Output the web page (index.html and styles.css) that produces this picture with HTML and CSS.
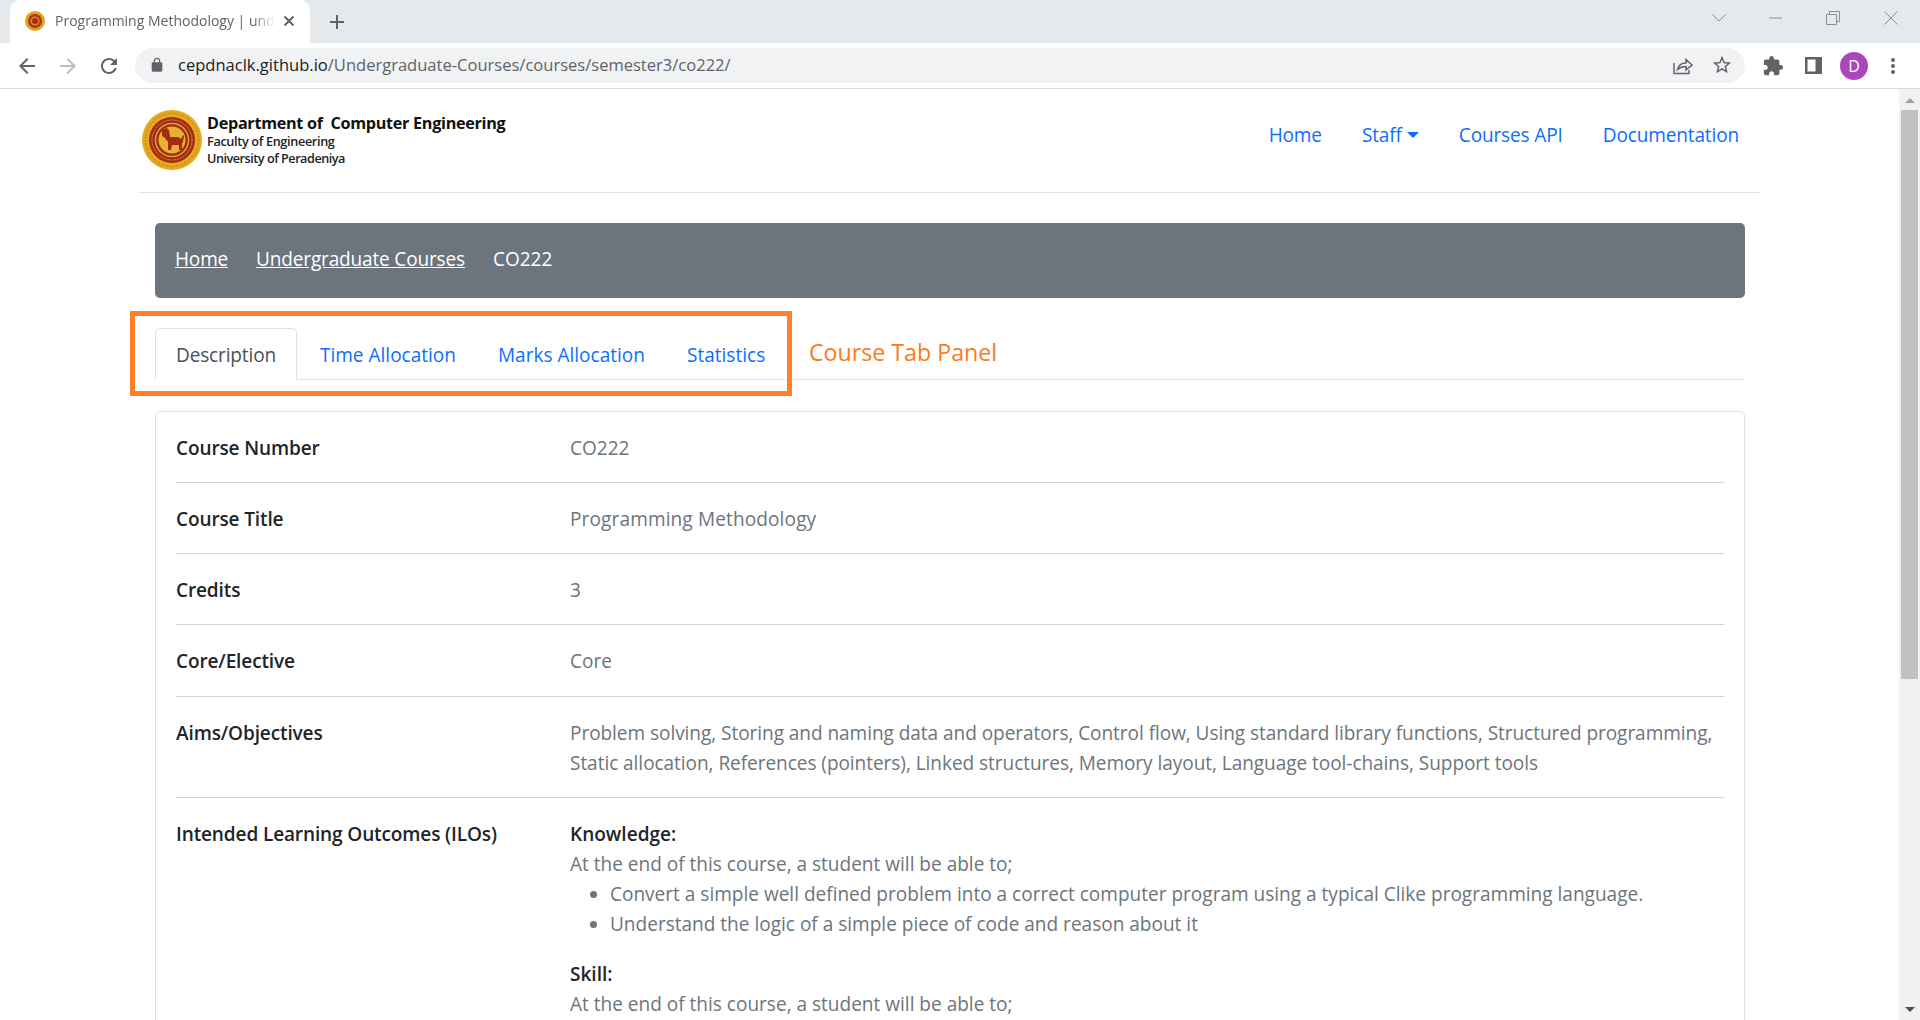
FILE: index.html
```html
<!DOCTYPE html>
<html lang="en">
<head>
<meta charset="utf-8">
<title>Programming Methodology | undergraduate courses</title>
<link rel="stylesheet" href="styles.css">
</head>
<body>
<header class="browser">
  <div class="tabstrip">
    <div class="tab">
      <svg class="favicon" viewBox="0 0 20 20"><circle cx="10" cy="10" r="10" fill="#e2a31c"/><circle cx="10" cy="10" r="7" fill="#a8381a"/><circle cx="10" cy="10" r="4.500" fill="#d98a1e"/><circle cx="10" cy="10" r="3" fill="#a52a17"/></svg>
      <span class="tab-title">Programming Methodology | und</span>
      <svg class="tab-close" viewBox="0 0 12 12"><path d="M1.500 1.500l9 9M10.500 1.500l-9 9"/></svg>
    </div>
    <svg class="new-tab" viewBox="0 0 14 14"><path d="M7 0v14M0 7h14"/></svg>
    <div class="window-controls">
      <svg class="wc wc-chev" viewBox="0 0 14 8"><path d="M.5.5L7 7 13.500.5"/></svg>
      <svg class="wc wc-min" viewBox="0 0 14 2"><path d="M0 1h13"/></svg>
      <svg class="wc wc-max" viewBox="0 0 14 14"><path d="M.5 3.500h10v10H.5zM3.500 3.500v-3h10v10h-3"/></svg>
      <svg class="wc wc-close" viewBox="0 0 14 14"><path d="M.5.5l13 13M13.500.5l-13 13"/></svg>
    </div>
  </div>
  <div class="toolbar">
    <svg class="tool tool-back" viewBox="0 0 24 24"><path d="M20 11H7.830l5.590-5.590L12 4l-8 8 8 8 1.410-1.410L7.830 13H20z"/></svg>
    <svg class="tool tool-fwd" viewBox="0 0 24 24"><path d="M12 4l-1.410 1.410L16.170 11H4v2h12.170l-5.580 5.590L12 20l8-8z"/></svg>
    <svg class="tool tool-reload" viewBox="0 0 24 24"><path d="M17.650 6.350C16.200 4.900 14.210 4 12 4c-4.420 0-7.990 3.580-7.990 8s3.570 8 7.990 8c3.730 0 6.840-2.550 7.730-6h-2.080c-.82 2.330-3.040 4-5.650 4-3.310 0-6-2.690-6-6s2.690-6 6-6c1.660 0 3.140.69 4.220 1.780L13 11h7V4l-2.350 2.350z"/></svg>
    <div class="omnibox">
      <svg class="lock" viewBox="0 0 24 24"><path d="M18 8h-1V6c0-2.760-2.240-5-5-5S7 3.240 7 6v2H6c-1.100 0-2 .9-2 2v10c0 1.100.9 2 2 2h12c1.100 0 2-.9 2-2V10c0-1.100-.9-2-2-2zM9 6c0-1.660 1.340-3 3-3s3 1.340 3 3v2H9V6z"/></svg>
      <div class="url"><span class="url-host">cepdnaclk.github.io</span>/Undergraduate-Courses/courses/semester3/co222/</div>
      <svg class="share" viewBox="0 0 20 20"><path d="M1 8v10.500h15V15M4.500 14.500c1-4 4-6.500 8.500-6.500V4.500l6 5.500-6 5v-3.500c-3.500 0-6 .8-8.500 3z"/></svg>
      <svg class="star" viewBox="0 0 24 24"><path d="M22 9.240l-7.190-.62L12 2 9.190 8.630 2 9.240l5.460 4.730L5.820 21 12 17.270 18.180 21l-1.630-7.030L22 9.240zM12 15.400l-3.760 2.270 1-4.280-3.320-2.880 4.380-.38L12 6.100l1.710 4.040 4.380.38-3.320 2.880 1 4.280L12 15.400z"/></svg>
    </div>
    <svg class="tool tool-ext" viewBox="0 0 24 24"><path d="M20.500 11H19V7c0-1.100-.9-2-2-2h-4V3.500C13 2.120 11.880 1 10.500 1S8 2.120 8 3.500V5H4c-1.100 0-1.990.9-1.990 2v3.800H3.500c1.490 0 2.700 1.210 2.700 2.700s-1.210 2.700-2.700 2.700H2V20c0 1.100.9 2 2 2h3.800v-1.500c0-1.490 1.210-2.700 2.700-2.700 1.490 0 2.700 1.210 2.700 2.700V22H17c1.100 0 2-.9 2-2v-4h1.500c1.380 0 2.500-1.120 2.500-2.500S21.880 11 20.500 11z"/></svg>
    <svg class="tool tool-panel" viewBox="0 0 17 17"><path fill-rule="evenodd" d="M0 0h17v17H0zM2.500 2.500v12h8v-12z"/></svg>
    <div class="avatar">D</div>
    <svg class="tool tool-menu" viewBox="0 0 4 16"><circle cx="2" cy="2" r="2"/><circle cx="2" cy="8" r="2"/><circle cx="2" cy="14" r="2"/></svg>
  </div>
</header>

<div class="viewport">
  <main class="page">
    <nav class="site-nav">
      <a class="brand" href="#">
        <svg class="brand-logo" viewBox="0 0 60 60">
          <circle cx="30" cy="30" r="30" fill="#e6ab20"/>
          <circle cx="30" cy="30" r="26.500" fill="none" stroke="#cf8a12" stroke-width="2" stroke-dasharray="1.500 1.500"/>
          <circle cx="30" cy="30" r="23" fill="#a32c14"/>
          <circle cx="30" cy="30" r="20" fill="none" stroke="#d99a24" stroke-width="1" stroke-dasharray="2 1"/>
          <circle cx="30" cy="30" r="16.500" fill="none" stroke="#e0a02a" stroke-width="1.500"/>
          <circle cx="30" cy="30" r="13.500" fill="#e8b030"/>
          <path fill="#a32c14" d="M20 20l5-2 2 2 1 7h7c2 0 3 1 4 2l2-4 1 1-1 6-1 1v7h-3v-5h-7l-1 5h-3v-8l-3-4-3-2z"/>
        </svg>
        <div class="brand-text">
          <div class="brand-name">Department of  Computer Engineering</div>
          <div class="brand-sub">Faculty of Engineering</div>
          <div class="brand-sub brand-uni">University of Peradeniya</div>
        </div>
      </a>
      <ul class="nav-links">
        <li><a href="#">Home</a></li>
        <li><a href="#" class="caret">Staff</a></li>
        <li><a href="#">Courses API</a></li>
        <li><a href="#">Documentation</a></li>
      </ul>
    </nav>

    <div class="content">
      <ol class="crumbs">
        <li><a href="#">Home</a></li>
        <li><a href="#">Undergraduate Courses</a></li>
        <li>CO222</li>
      </ol>

      <div class="tabs-wrap">
        <ul class="tabs">
          <li class="active">Description</li>
          <li>Time Allocation</li>
          <li>Marks Allocation</li>
          <li>Statistics</li>
        </ul>
        <div class="callout-box"></div>
        <div class="callout-label">Course Tab Panel</div>
      </div>

      <section class="card">
        <div class="row"><div class="key">Course Number</div><div class="val">CO222</div></div>
        <div class="row"><div class="key">Course Title</div><div class="val val-wide">Programming Methodology</div></div>
        <div class="row"><div class="key">Credits</div><div class="val">3</div></div>
        <div class="row row-tall"><div class="key">Core/Elective</div><div class="val">Core</div></div>
        <div class="row"><div class="key">Aims/Objectives</div><div class="val val-tight">Problem solving, Storing and naming data and operators, Control flow, Using standard library functions, Structured programming, Static allocation, References (pointers), Linked structures, Memory layout, Language tool-chains, Support tools</div></div>
        <div class="row">
          <div class="key">Intended Learning Outcomes (ILOs)</div>
          <div class="val">
            <div class="sub-head">Knowledge:</div>
            At the end of this course, a student will be able to;
            <ul class="ilo">
              <li>Convert a simple well defined problem into a correct computer program using a typical Clike programming language.</li>
              <li>Understand the logic of a simple piece of code and reason about it</li>
            </ul>
            <div class="sub-head">Skill:</div>
            At the end of this course, a student will be able to;
          </div>
        </div>
      </section>
    </div>
  </main>
  <div class="scrollbar">
    <span class="sb-up"></span>
    <div class="sb-thumb"></div>
    <span class="sb-down"></span>
  </div>
</div>
</body>
</html>
```

FILE: styles.css
```css
* { box-sizing: border-box; }
html, body { margin: 0; height: 100%; overflow: hidden; }
body {
  display: flex;
  flex-direction: column;
  background: #fff;
  color: #212529;
  font-family: "Open Sans", "Liberation Sans", sans-serif;
  font-size: 19.05px;
  line-height: 30px;
}
a { color: #0d6efd; text-decoration: none; }
ul, ol { margin: 0; padding: 0; list-style: none; }

/* Browser chrome */
.browser { flex: none; height: 89px; border-bottom: 1px solid #d9dbdd; }
.tabstrip { display: flex; align-items: center; height: 43px; background: #e6e9ec; padding-left: 10px; }
.tab {
  display: flex; align-items: center; width: 300px; height: 43px;
  background: #fff; border-radius: 10px 10px 0 0; padding: 0 15px 2px;
  font-family: "Open Sans", sans-serif; font-size: 14px; color: #5f6368;
}
.favicon { width: 20px; height: 20px; flex: none; margin-right: 10px; }
.tab-title { white-space: nowrap; margin-right: auto; -webkit-mask-image: linear-gradient(90deg, #000 90%, transparent); mask-image: linear-gradient(90deg, #000 90%, transparent); }
.tab-close { width: 12px; height: 12px; flex: none; fill: none; stroke: #5f6368; stroke-width: 2; }
.new-tab { width: 14px; height: 14px; margin-left: 20px; fill: none; stroke: #5f6368; stroke-width: 2; }
.window-controls { margin-left: auto; display: flex; align-items: center; height: 36px; margin-top: -7px; padding-right: 22px; }
.wc { fill: none; stroke: #8b8d90; stroke-width: 1; flex: none; }
.wc-chev { width: 14px; height: 8px; margin-right: 43px; }
.wc-min { width: 14px; height: 2px; margin-right: 43px; }
.wc-max { width: 14px; height: 14px; margin-right: 44px; }
.wc-close { width: 14px; height: 14px; }
.toolbar { display: flex; align-items: center; height: 45px; padding-left: 15px; }
.tool { flex: none; fill: #5f6368; }
.tool-back, .tool-fwd, .tool-reload { width: 24px; height: 24px; margin-right: 17px; }
.tool-fwd { fill: #bcbfc2; }
.tool-reload { margin-right: 14px; }
.omnibox { flex: none; display: flex; align-items: center; width: 1610px; height: 35px; margin-top: -1px; background: #f0f2f4; border-radius: 18px; padding-left: 14px; padding-right: 12px; }
.lock { width: 16px; height: 16px; fill: #5f6368; margin-right: 13px; flex: none; }
.url { font-size: 16.55px; color: #5f6368; white-space: nowrap; line-height: 20px; margin-right: auto; }
.url-host { color: #202124; }
.share { width: 20px; height: 20px; fill: none; stroke: #5f6368; stroke-width: 1.500; margin-right: 18px; }
.star { width: 22px; height: 22px; fill: #5f6368; }
.tool-ext { width: 22px; height: 22px; margin-left: 17px; }
.tool-panel { width: 17px; height: 17px; margin-left: 21px; }
.avatar { flex: none; width: 28px; height: 28px; margin-left: 18px; border-radius: 50%; background: #ab47bc; color: #fff; font-size: 16px; line-height: 28px; text-align: center; }
.tool-menu { width: 4px; height: 16px; margin-left: 23px; }

/* Page */
.viewport { flex: 1; min-height: 0; display: flex; }
.page { flex: 1; min-width: 0; padding: 0 139px; overflow: hidden; }
.scrollbar { flex: none; width: 21px; display: flex; flex-direction: column; align-items: center; background: #f1f1f1; }
.sb-up { width: 0; height: 0; margin-top: 9px; border: 5px solid transparent; border-top: 0; border-bottom: 5px solid #a3a3a3; }
.sb-thumb { width: 17px; height: 569px; margin-top: 7px; background: #c1c1c1; }
.sb-down { width: 0; height: 0; margin-top: auto; margin-bottom: 8px; border: 5px solid transparent; border-bottom: 0; border-top: 5px solid #505050; }

.site-nav { display: flex; justify-content: space-between; align-items: flex-start; height: 104px; padding-top: 21px; border-bottom: 1px solid #dee2e6; }
.brand { display: flex; align-items: flex-start; color: #000; padding-left: 3px; }
.brand-logo { width: 60px; height: 60px; flex: none; margin-right: 5px; }
.brand-text { padding-top: 3px; }
.brand-name { font-weight: 700; font-size: 16.2px; line-height: 20px; white-space: pre; letter-spacing: -.3px; color: #111; }
.brand-sub { font-weight: 600; font-size: 12.7px; line-height: 17px; letter-spacing: -.35px; color: #222; }
.brand-uni { letter-spacing: -.5px; }
.nav-links { display: flex; margin-top: 10px; padding-right: 1px; }
.nav-links a { display: block; padding: 0 20px; letter-spacing: -.14px; }
.caret::after { content: ""; display: inline-block; margin-left: 5px; vertical-align: 4px; border-top: 6px solid; border-left: 6px solid transparent; border-right: 6px solid transparent; }

.content { padding: 30px 15px 0 16px; }
.crumbs { display: flex; align-items: center; gap: 28px; height: 75px; padding: 0 20px 4px; background: #6c757d; border-radius: 5px; color: #fff; }
.crumbs a { color: #fff; text-decoration: underline; letter-spacing: -.17px; }

.tabs-wrap { position: relative; margin-top: 30px; }
.tabs { display: flex; border-bottom: 1px solid #dee2e6; height: 52px; }
.tabs li { padding: 11px 20px 9px; height: 52px; border: 1px solid transparent; color: #0d6efd; }
.tabs li.active { color: #495057; background: #fff; border-color: #dee2e6 #dee2e6 #fff; border-radius: 5px 5px 0 0; letter-spacing: -.15px; margin-right: 2px; }
.callout-box { position: absolute; left: -25px; top: -17px; width: 662px; height: 85px; border: 5px solid #ff8127; pointer-events: none; }
.callout-label { position: absolute; left: 654px; top: 4px; color: #fb7a20; font-size: 23.2px; line-height: 40px; }

.card { margin-top: 31px; border: 1px solid #dee2e6; border-radius: 5px; padding: 0 20px; }
.row { display: grid; grid-template-columns: 394px 1fr; padding: 21px 0 19px; border-bottom: 1px solid #cfd1d3; }
.row-tall { padding-bottom: 20px; }
.row:last-child { border-bottom: 0; }
.key { font-weight: 600; color: #212529; letter-spacing: -.13px; }
.val { color: #6c757d; }
.val-wide { letter-spacing: .13px; }
.val-tight { letter-spacing: -.05px; }
.sub-head { font-weight: 600; color: #212529; }
.ilo { list-style: disc; padding-left: 40px; margin-bottom: 20px; }
```
